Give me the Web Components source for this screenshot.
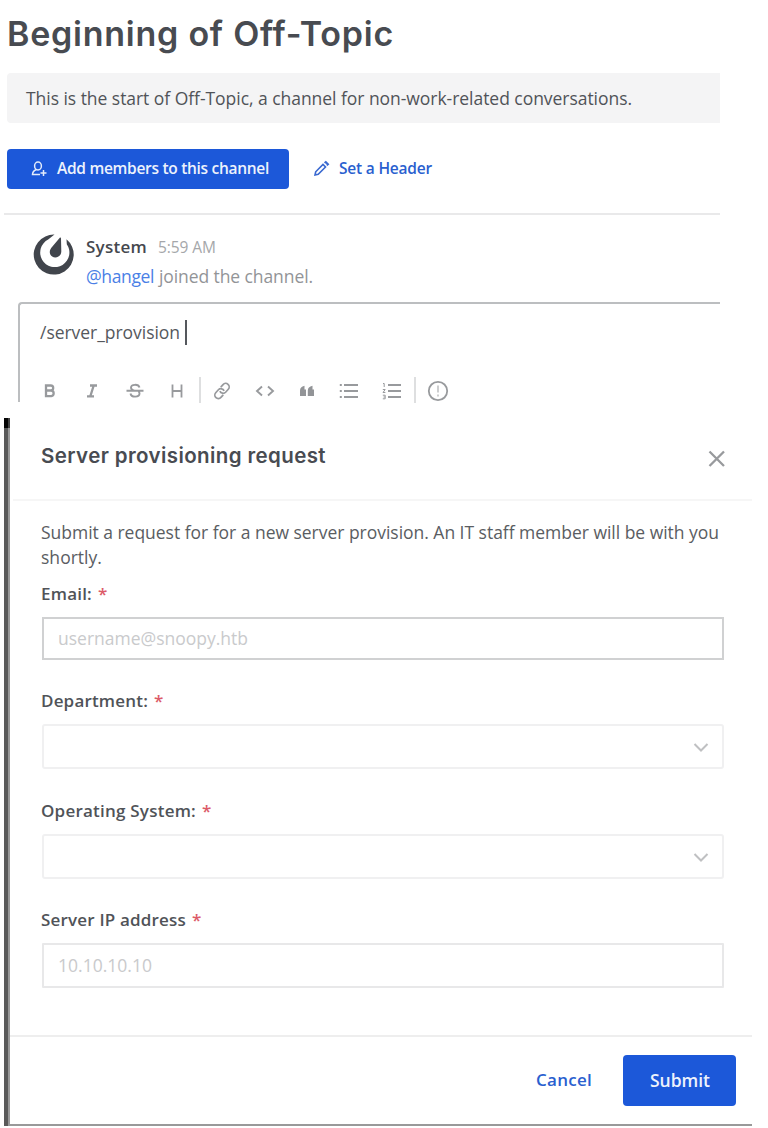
<!DOCTYPE html>
<html lang="en">
<head>
<meta charset="utf-8">
<title>Off-Topic</title>
<style>
  html, body { margin: 0; background: #fff; }
  body { width: 768px; height: 1128px; overflow: hidden; font-family: "Open Sans", "Noto Sans", sans-serif; color: #4b4e54; }
</style>
</head>
<body>
<chat-page></chat-page>
<script>
const define = (name, html, setup) => {
  const tpl = document.createElement('template');
  tpl.innerHTML = html;
  customElements.define(name, class extends HTMLElement {
    connectedCallback() {
      if (this.shadowRoot) return;
      this.attachShadow({ mode: 'open' }).append(tpl.content.cloneNode(true));
      if (setup) setup(this, this.shadowRoot);
    }
  });
};

define('chat-page', `
<style>:host{display:block;width:752px} provision-dialog{margin:16px 0 0 4px}</style>
<channel-intro></channel-intro>
<system-post></system-post>
<message-editor></message-editor>
<provision-dialog></provision-dialog>`);

define('channel-intro', `
<style>
:host{display:block;height:215px;box-sizing:border-box;margin-left:4px;width:716px;border-bottom:2px solid #e9e9ea;padding-left:3px}
h1{margin:0;height:73px;padding-top:11px;box-sizing:border-box;font:600 34px/46px Inter,sans-serif;color:#484b51}
.note{height:50px;background:#f4f4f5;border-radius:4px 0 0 4px;display:flex;align-items:center;padding-left:19px;font-size:17.5px;color:#505358}
.row{display:flex;margin-top:26px;height:40px}
</style>
<h1><fit-label width="387">Beginning of Off-Topic</fit-label></h1>
<div class="note"><fit-label width="606">This is the start of Off-Topic, a channel for non-work-related conversations.</fit-label></div>
<div class="row">
  <action-button primary style="width:282px;--pad:24px;--gap:10px;--size:15.5px"><ui-icon name="add" slot="icon"></ui-icon><fit-label width="212">Add members to this channel</fit-label></action-button>
  <action-button style="width:160px;--pad:24px;--gap:10px;--size:15.5px"><ui-icon name="pencil" slot="icon"></ui-icon><fit-label width="93">Set a Header</fit-label></action-button>
</div>`);

define('action-button', `
<style>
:host{display:block;height:100%}
button{all:unset;box-sizing:border-box;width:100%;height:100%;display:flex;align-items:center;padding-left:var(--pad);gap:var(--gap);border-radius:4px;color:#2a5fcf;font-size:var(--size);font-weight:600;line-height:22px}
:host([primary]) button{background:#1c58d9;color:#edf2fc}
::slotted(fit-label){position:relative;top:-1px}
</style><button><slot name="icon"></slot><slot></slot></button>`);

define('system-post', `
<style>
:host{display:flex;height:87px;box-sizing:border-box;padding:19px 0 0 33px;gap:12px}
.meta{display:flex;align-items:baseline;gap:11px;font-size:17px;line-height:28px;margin-top:-1px;color:#45484e}
b{font-weight:600}.time{font-size:15.5px;color:#a5a7aa}
.body{display:flex;gap:5px;font-size:17.5px;line-height:30px;color:#929497}.body span{color:#4a7fe6}
</style>
<ui-icon name="logo"></ui-icon>
<div><div class="meta"><b><fit-label width="61">System</fit-label></b><fit-label class="time" width="58">5:59 AM</fit-label></div>
<div class="body"><span><fit-label width="68">@hangel</fit-label></span><fit-label width="154">joined the channel.</fit-label></div></div>`);

define('message-editor', `
<style>
:host{display:block;box-sizing:border-box;margin-left:18px;width:702px;height:100px;border:solid #bcbec0;border-width:2px 0 0 2px;border-top-left-radius:4px}
.text{display:flex;align-items:center;padding:14px 0 0 20px;height:28px;font-size:17.5px;line-height:26px;color:#55585d}
.text i{width:2px;height:25px;background:#55585d;margin-left:5px}
.bar{display:flex;margin:31px 0 0 9px;height:26px;align-items:center}
.bar ui-icon{width:42.3px;margin-top:2px}
.sep{width:2px;height:26px;background:#dedfe0}
</style>
<div class="text"><fit-label width="140">/server_provision</fit-label><i></i></div>
<div class="bar"><ui-icon name="bold"></ui-icon><ui-icon name="italic"></ui-icon><ui-icon name="strike"></ui-icon><ui-icon name="heading"></ui-icon><div class="sep" style="margin:0 0 0 1px"></div><ui-icon name="link"></ui-icon><ui-icon name="code"></ui-icon><ui-icon name="quote"></ui-icon><ui-icon name="list"></ui-icon><ui-icon name="olist"></ui-icon><div class="sep" style="margin:0 1px 0 1px"></div><ui-icon name="info"></ui-icon></div>`);

define('provision-dialog', `
<style>
:host{display:flex;width:748px;height:708px}
.edge{width:6px;background:linear-gradient(90deg,#5a5a5a 66.6%,#999 66.6%)}
.edge::before{content:"";display:block;height:10px;background:linear-gradient(90deg,#050505 66.6%,#444 66.6%)}
.panel{flex:1;box-sizing:border-box;border-bottom:2px solid #999;display:flex;flex-direction:column}
header{display:flex;justify-content:space-between;margin-left:3px;padding:0 26px 0 28px;height:83px;box-sizing:border-box;border-bottom:2px solid #f6f6f6;color:#484b51}
h2{margin:0;padding-top:23px;font:600 20.5px/30px Inter,sans-serif}
header ui-icon{margin-top:32px}
main{padding:19px 28px 0 32px;height:534px;box-sizing:border-box;color:#5a5d62}
p{margin:0 0 0 -1px;font-size:17.5px;line-height:24.5px}
footer{flex:1;border-top:2px solid #eee;display:flex;justify-content:flex-end;padding:18px 16px 0 0}
footer action-button{height:51px}
</style>
<div class="edge"></div>
<div class="panel">
<header><h2><fit-label width="285">Server provisioning request</fit-label></h2><ui-icon name="close"></ui-icon></header>
<main>
<p><fit-label width="678">Submit a request for for a new server provision. An IT staff member will be with you</fit-label><br><fit-label width="61">shortly.</fit-label></p>
<form-field style="--top:12px;--line:#d0d1d2;--radius:0;--h:43px" label="Email:" width="51" hint="username@snoopy.htb" hint-width="190"></form-field>
<form-field style="--top:28px" label="Department:" width="107" select></form-field>
<form-field style="--top:29px" label="Operating System:" width="155" select></form-field>
<form-field style="--top:28px;--line:#e8e8e9;--radius:1px" label="Server IP address" width="145" hint="10.10.10.10" hint-width="94"></form-field>
</main>
<footer>
<action-button style="width:111px;--pad:24px;--size:17px"><fit-label width="56">Cancel</fit-label></action-button>
<action-button primary style="width:113px;--pad:27px;--size:17.5px"><fit-label width="60">Submit</fit-label></action-button>
</footer>
</div>`);

define('form-field', `
<style>
:host{display:block;padding-top:var(--top)}
.label{display:flex;gap:5px;font-size:17px;line-height:26px;font-weight:600;color:#505358;margin-left:-1px}
.label em{font-style:normal;color:#dc5a68}
.label fit-label{margin-right:1px}
.box{box-sizing:border-box;height:var(--h,45px);margin-top:10px;border:2px solid var(--line,#f0f0f1);border-radius:var(--radius,3px);display:flex;align-items:center;padding:0 13px 0 14px;font-size:17.5px;line-height:26px;color:#c9cacc}
.box fit-label{position:relative;top:-1px}
.box ui-icon{margin-left:auto}
</style><div class="label"></div><div class="box"></div>`, (host, root) => {
  const attr = n => host.getAttribute(n);
  root.querySelector('.label').innerHTML = `<fit-label width="${attr('width')}">${attr('label')}</fit-label><em>*</em>`;
  root.querySelector('.box').innerHTML = host.hasAttribute('select')
    ? '<ui-icon name="chevron"></ui-icon>'
    : `<fit-label width="${attr('hint-width')}">${attr('hint')}</fit-label>`;
});

const G = 'fill="none" stroke="#989a9d"';
const ICONS = {
  add: [16, 16, '<g fill="none" stroke="#e4ecfb" stroke-width="1.5"><ellipse cx="7" cy="5" rx="3.4" ry="4"/><path d="M5.5 8.5C3 9.5 1.5 11 1.5 13.5H9M12.5 9v6M9.5 12h6"/></g>'],
  pencil: [16, 16, '<g fill="none" stroke="#3a69d0" stroke-width="1.6"><path d="M2 14l.7-3.200L10 3.500l2.500 2.500L5.200 13.300z"/><path d="M11.600 2l1.200-1 2.200 2.200-1.200 1.200" stroke-width="2"/></g>'],
  logo: [41, 41, '<path d="M21.500.6A20 20 0 1 0 33.500 5.200L33.800 10.200A14.600 14.600 0 1 1 15.200 5.500Z" fill="#41454c"/><path d="M27 3.500Q28 3.200 28 4.500L28.300 17.500C28 25 17.500 25.500 16.800 18.500C16.600 16 17.800 14.500 19 13Z" fill="#41454c"/>'],
  bold: [20, 20, `<path d="M6 4.500h4.700a2.500 2.500 0 0 1 0 5H6zM6 9.500h5.300a2.900 2.900 0 0 1 0 5.700H6z" ${G} stroke-width="2.300"/>`],
  italic: [20, 20, `<path d="M8 4.500h7M5 15.300h7M11.700 4.500L8.300 15.300" ${G} stroke-width="2.300"/>`],
  strike: [20, 20, `<path d="M14.500 6.500C13.500 2.800 6 3 6 6.700c0 1.800 1.600 2.500 4 3.200M5.500 12.500c.7 4.300 9 4 9 0 0-1-.4-1.700-1-2.200M1.500 9.800h17" ${G} stroke-width="1.900"/>`],
  heading: [20, 20, `<path d="M5.500 3.500v13M14.500 3.500v13M5.500 10h9" ${G} stroke-width="1.800"/>`],
  link: [20, 20, `<g ${G} stroke-width="1.700" transform="rotate(-48 10 10)"><path d="M8 13.500H4.500a3.500 3.500 0 0 1 0-7h4a3.500 3.500 0 0 1 3 5"/><path d="M12 6.500h3.500a3.500 3.500 0 0 1 0 7h-4a3.500 3.500 0 0 1-3-5"/></g>`],
  code: [20, 20, `<path d="M7 5.500L2 10l5 4.500M13 5.500l5 4.500-5 4.500" ${G} stroke-width="1.900"/>`],
  quote: [20, 20, '<path d="M3 15V9.500Q3 6 7.500 4.800V8.500H9V15zM10.800 15V9.500Q10.800 6 15.500 4.800V8.500H17V15z" fill="#929497"/>'],
  list: [20, 20, `<path d="M5 4h14M5 10h14M5 16h14M.8 4h2M.8 10h2M.8 16h2" ${G} stroke-width="2"/>`],
  olist: [20, 20, `<path d="M6 4h13M6 10h13M6 16h13" ${G} stroke-width="2"/><path d="M1 2.500h1.200V6M.8 8.500h2.400L1 11.500h2.400M.8 14.200h2.400v3.600H.8M1.500 16h1.500" ${G} stroke-width="1"/>`],
  info: [22, 22, `<circle cx="11" cy="11" r="9.200" ${G} stroke-width="1.800"/><path d="M11 5.500v7M11 14.500v2" ${G} stroke-width="1.600" opacity=".6"/>`],
  close: [18, 18, `<path d="M1.500 1.500l14.500 14.500M16 1.500L1.500 16" ${G} stroke-width="2.300"/>`],
  chevron: [16, 16, '<path d="M1.500 5L8 11.500l6.500-6.500" fill="none" stroke="#bfc0c2" stroke-width="2"/>'],
};
define('ui-icon', `<style>:host{display:flex;flex:none;justify-content:center}svg{display:block;overflow:visible;flex:none}</style>`, (host, root) => {
  const [w, h, art] = ICONS[host.getAttribute('name')];
  root.innerHTML += `<svg width="${w}" height="${h}" viewBox="0 0 ${w} ${h}">${art}</svg>`;
});

/* Single-line label that tracks its letters to fill the declared width. */
define('fit-label', `<style>:host{display:inline-block;white-space:nowrap}</style><span><slot></slot></span>`, (host, root) => {
  const width = +host.getAttribute('width');
  const span = root.querySelector('span');
  const gap = (width - span.getBoundingClientRect().width) / host.textContent.length;
  span.style.letterSpacing = gap.toFixed(3) + 'px';
  host.style.width = width + 'px';
});
</script>
</body>
</html>
